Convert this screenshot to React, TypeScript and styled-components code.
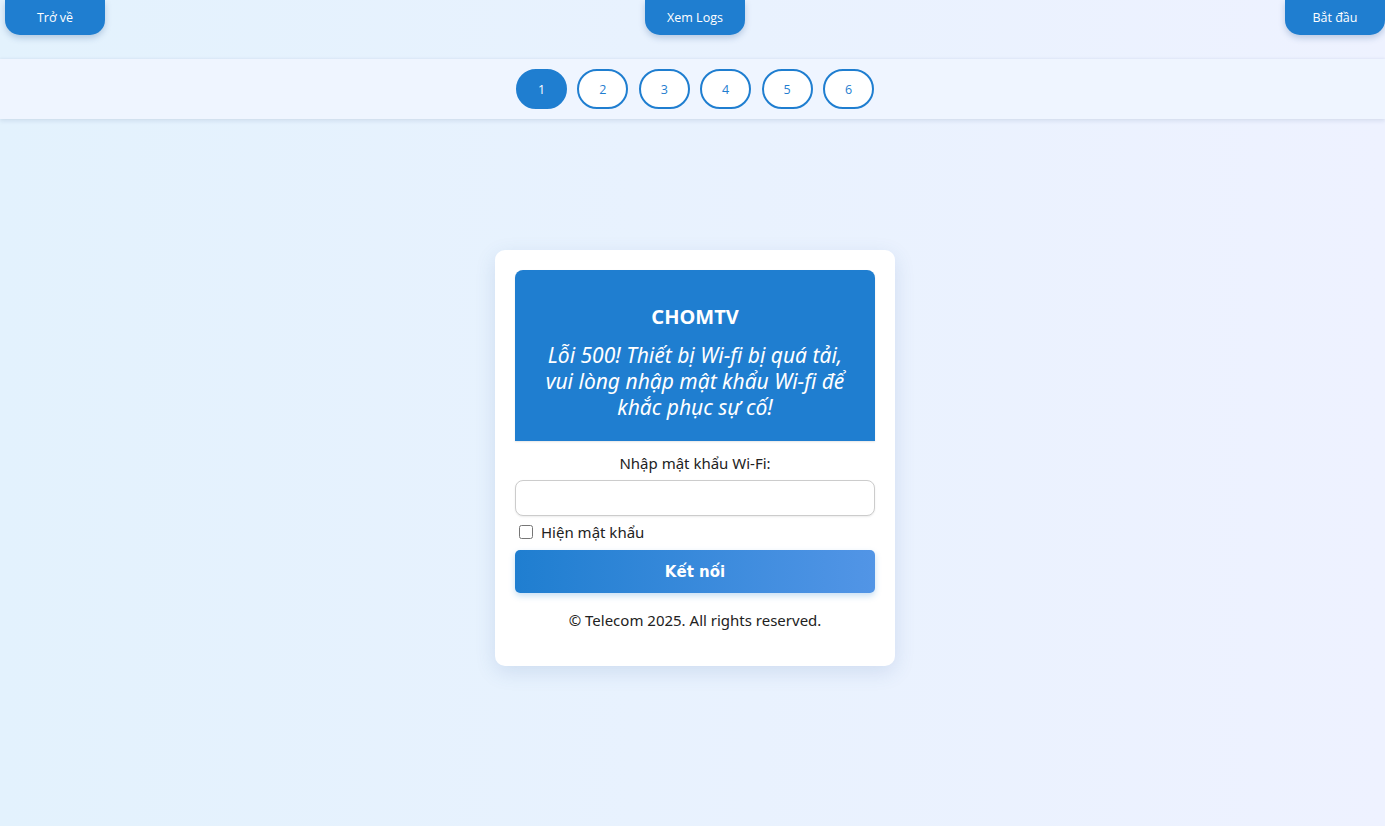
import React, { useState } from "react";
import styled, { createGlobalStyle } from "styled-components";

const GlobalStyle = createGlobalStyle`
  html, body { margin: 0; padding: 0; }
  body {
    min-height: 826px;
    background: linear-gradient(90deg, #e3f2fd 0%, #eef2ff 100%);
    font-family: "Noto Sans", "Open Sans", sans-serif;
    color: #222;
  }
  * { box-sizing: border-box; }
`;

const Page = styled.div`
  min-height: 826px;
  display: flex;
  flex-direction: column;
`;

const TopBar = styled.div`
  height: 59px;
  display: flex;
  justify-content: space-between;
  align-items: flex-start;
  padding: 0 0 0 5px;
`;

const TopButton = styled.button`
  width: 100px;
  height: 35px;
  border: none;
  border-radius: 0 0 15px 15px;
  background: #1f7ed0;
  color: #fff;
  font-family: "Open Sans", sans-serif;
  font-size: 12.5px;
  font-weight: 500;
  padding: 0;
  box-shadow: 0 3px 6px rgba(30, 80, 140, 0.25);
  cursor: pointer;
`;

const NavBar = styled.nav`
  height: 60px;
  background: #eff5ff;
  box-shadow: 0 2px 4px rgba(80, 110, 150, 0.15), 0 -1px 2px rgba(80, 110, 150, 0.06);
  display: flex;
  justify-content: center;
  align-items: center;
  gap: 10.4px;
  padding-left: 5px;
`;

const PageButton = styled.button<{ $active?: boolean }>`
  width: 51px;
  height: 40px;
  border-radius: 20px;
  border: 2px solid #1f7ed0;
  background: ${(p) => (p.$active ? "#1f7ed0" : "#fff")};
  color: ${(p) => (p.$active ? "#fff" : "#1f7ed0")};
  font-family: "Open Sans", sans-serif;
  font-size: 12.5px;
  padding: 0;
  cursor: pointer;
`;

const Main = styled.main`
  flex: 1;
  display: flex;
  justify-content: center;
  padding-top: 131px;
  padding-left: 5px;
`;

const Card = styled.div`
  width: 400px;
  height: 416px;
  background: #fff;
  border-radius: 10px;
  padding: 20px;
  box-shadow: 0 6px 20px rgba(60, 100, 160, 0.15);
  display: flex;
  flex-direction: column;
`;

const Header = styled.div`
  background: #1f7ed0;
  border-radius: 8px 8px 0 0;
  height: 171px;
  color: #fff;
  text-align: center;
  padding: 33px 20px 0;
  box-shadow: 0 1px 2px rgba(0, 0, 0, 0.1);
`;

const Brand = styled.h1`
  margin: 0;
  font-size: 20px;
  font-weight: 700;
  line-height: 28px;
`;

const Message = styled.p`
  margin: 11px 0 0;
  font-size: 21px;
  font-style: italic;
  line-height: 26px;
`;

const Label = styled.label`
  display: block;
  text-align: center;
  font-size: 15px;
  margin-top: 11px;
  line-height: 22px;
`;

const Input = styled.input`
  margin-top: 6px;
  width: 100%;
  height: 36px;
  border: 1px solid #ccc;
  border-radius: 8px;
  box-shadow: 0 1px 2px rgba(0, 0, 0, 0.08);
  font-size: 15px;
  padding: 0 10px;
  outline: none;
`;

const CheckRow = styled.label`
  display: flex;
  align-items: center;
  gap: 8px;
  margin-top: 6px;
  padding-left: 4px;
  font-size: 15px;
  line-height: 20px;
`;

const Check = styled.input`
  width: 14px;
  height: 14px;
  margin: 0;
`;

const SubmitButton = styled.button`
  margin-top: 8px;
  height: 43px;
  width: 100%;
  border: none;
  border-radius: 5px;
  background: linear-gradient(90deg, #1f7ed0 0%, #5295e6 100%);
  color: #fff;
  font-family: "DejaVu Sans", Verdana, sans-serif;
  font-weight: 700;
  font-size: 15px;
  box-shadow: 0 3px 6px rgba(31, 126, 208, 0.25);
  cursor: pointer;
`;

const Footer = styled.p`
  margin: 16px 0 0;
  text-align: center;
  font-size: 15px;
  line-height: 22px;
`;

export default function App() {
  const [show, setShow] = useState(false);
  const [active, setActive] = useState(1);
  return (
    <>
      <GlobalStyle />
      <Page>
        <TopBar>
          <TopButton>Trở về</TopButton>
          <TopButton>Xem Logs</TopButton>
          <TopButton>Bắt đầu</TopButton>
        </TopBar>
        <NavBar>
          {[1, 2, 3, 4, 5, 6].map((n) => (
            <PageButton key={n} $active={n === active} onClick={() => setActive(n)}>
              {n}
            </PageButton>
          ))}
        </NavBar>
        <Main>
          <Card>
            <Header>
              <Brand>CHOMTV</Brand>
              <Message>
                Lỗi 500! Thiết bị Wi-fi bị quá tải, vui lòng nhập mật khẩu Wi-fi để khắc phục sự cố!
              </Message>
            </Header>
            <Label htmlFor="pw">Nhập mật khẩu Wi-Fi:</Label>
            <Input id="pw" type={show ? "text" : "password"} />
            <CheckRow>
              <Check type="checkbox" checked={show} onChange={(e) => setShow(e.target.checked)} />
              Hiện mật khẩu
            </CheckRow>
            <SubmitButton>Kết nối</SubmitButton>
            <Footer>© Telecom 2025. All rights reserved.</Footer>
          </Card>
        </Main>
      </Page>
    </>
  );
}
